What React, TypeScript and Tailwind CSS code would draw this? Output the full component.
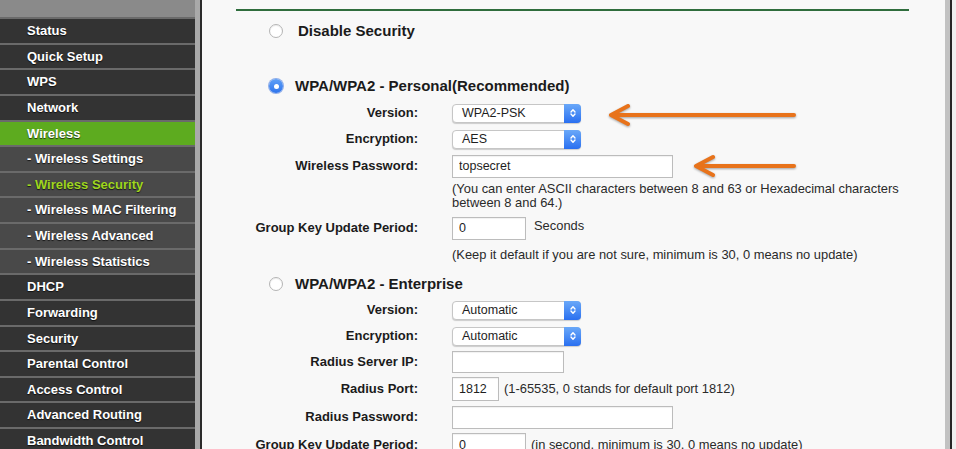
type MenuItem = { label: string; kind: "main" | "active" | "sub" | "subActive" };

const menu: MenuItem[] = [
  { label: "Status", kind: "main" },
  { label: "Quick Setup", kind: "main" },
  { label: "WPS", kind: "main" },
  { label: "Network", kind: "main" },
  { label: "Wireless", kind: "active" },
  { label: "- Wireless Settings", kind: "sub" },
  { label: "- Wireless Security", kind: "subActive" },
  { label: "- Wireless MAC Filtering", kind: "sub" },
  { label: "- Wireless Advanced", kind: "sub" },
  { label: "- Wireless Statistics", kind: "sub" },
  { label: "DHCP", kind: "main" },
  { label: "Forwarding", kind: "main" },
  { label: "Security", kind: "main" },
  { label: "Parental Control", kind: "main" },
  { label: "Access Control", kind: "main" },
  { label: "Advanced Routing", kind: "main" },
  { label: "Bandwidth Control", kind: "main" },
];

const rowBg = {
  main: "bg-[#333333] text-white",
  active: "bg-[#5dab1f] text-white",
  sub: "bg-[#494949] text-white",
  subActive: "bg-[#494949] text-[#9fd61e]",
};

function Radio({ checked }: { checked?: boolean }) {
  if (checked) {
    return (
      <span className="flex h-[14px] w-[14px] items-center justify-center rounded-full bg-gradient-to-b from-[#5e9ff7] to-[#2f74ec] shadow-[0_0_0_1px_rgba(40,100,220,0.5)]">
        <span className="h-[5px] w-[5px] rounded-full bg-white" />
      </span>
    );
  }
  return (
    <span className="h-[14px] w-[14px] rounded-full border border-[#b5b5b5] bg-white shadow-[inset_0_1px_1px_rgba(0,0,0,0.08)]" />
  );
}

function MacSelect({ value }: { value: string }) {
  return (
    <div className="flex h-[19px] w-[129px] rounded-[4px] border border-[#c6c6c6] bg-white shadow-[0_1px_1px_rgba(0,0,0,0.18)]">
      <span className="flex-1 pl-[9px] text-[12.5px] leading-[17px] text-[#1e1e1e]">{value}</span>
      <span className="-my-px -mr-px flex w-[17px] items-center justify-center rounded-r-[4px] bg-gradient-to-b from-[#6aa8f8] to-[#2a6ff0]">
        <svg width="8" height="12" viewBox="0 0 8 12" fill="none" stroke="white" strokeWidth="1.4" strokeLinecap="round" strokeLinejoin="round">
          <path d="M2 5 L4 2.8 L6 5" />
          <path d="M2 7 L4 9.2 L6 7" />
        </svg>
      </span>
    </div>
  );
}

function TextBox({ value, w, h }: { value: string; w: string; h: string }) {
  return (
    <input
      readOnly
      value={value}
      className={`${w} ${h} border border-[#bcbcbc] bg-white px-[6px] text-[12.5px] text-[#1e1e1e] shadow-[inset_0_1px_1px_rgba(0,0,0,0.06)] outline-none`}
    />
  );
}

function Row({ label, h, children }: { label: string; h: string; children: React.ReactNode }) {
  return (
    <div className={`flex ${h} items-center`}>
      <div className="w-[182px] text-right text-[13px] font-bold text-[#1b1b1b]">{label}</div>
      <div className="ml-[34px] flex items-center">{children}</div>
    </div>
  );
}

function Help({ children }: { children: React.ReactNode }) {
  return <p className="ml-[216px] pt-[2px] text-[12.9px] leading-[14px] text-[#2a2a2a]">{children}</p>;
}

export default function App() {
  return (
    <div className="relative flex h-[449px] w-[956px] overflow-hidden bg-[#f8f8f8] font-['Liberation_Sans',Arial,sans-serif]">
      {/* sidebar */}
      <aside className="w-[195px] shrink-0 bg-[#333333]">
        <div className="h-[17px] bg-[#8a8a8a]" />
        {menu.map((item) => (
          <div
            key={item.label}
            className={`flex h-[25.625px] items-center border-t-2 border-[#6a6a6a] pl-[27px] text-[13px] font-bold whitespace-nowrap [text-shadow:0_1px_1px_rgba(0,0,0,0.7)] ${rowBg[item.kind]}`}
          >
            {item.label}
          </div>
        ))}
      </aside>
      <div className="w-[5px] shrink-0 bg-[#a9a9a9]" />
      <div className="w-[2px] shrink-0 bg-[#2b2b2b]" />

      {/* content */}
      <main className="flex-1 pl-[34px] pt-[9px]">
        <div className="h-[2px] w-[673px] bg-[#2f6d3d]" />

        <div className="flex h-[40px] items-center pl-[33px]">
          <Radio />
          <span className="ml-[15px] text-[15px] font-bold text-[#1b1b1b]">Disable Security</span>
        </div>

        <div className="mt-[21px] flex h-[28px] items-center pl-[33px]">
          <Radio checked />
          <span className="ml-[12px] text-[15px] font-bold text-[#1b1b1b]">WPA/WPA2 - Personal(Recommended)</span>
        </div>
        <Row label="Version:" h="h-[26px]">
          <MacSelect value="WPA2-PSK" />
        </Row>
        <Row label="Encryption:" h="h-[26px]">
          <MacSelect value="AES" />
        </Row>
        <Row label="Wireless Password:" h="h-[28px]">
          <TextBox value="topsecret" w="w-[221px]" h="h-[23px]" />
        </Row>
        <Help>
          (You can enter ASCII characters between 8 and 63 or Hexadecimal characters
          <br />
          between 8 and 64.)
        </Help>
        <Row label="Group Key Update Period:" h="h-[36px]">
          <TextBox value="0" w="w-[74px]" h="h-[23px]" />
          <span className="ml-[8px] -mt-[4px] text-[12.9px] text-[#2a2a2a]">Seconds</span>
        </Row>
        <Help>(Keep it default if you are not sure, minimum is 30, 0 means no update)</Help>

        <div className="mt-[9px] flex h-[26px] items-center pl-[33px]">
          <Radio />
          <span className="ml-[12px] text-[15px] font-bold text-[#1b1b1b]">WPA/WPA2 - Enterprise</span>
        </div>
        <Row label="Version:" h="h-[26px]">
          <MacSelect value="Automatic" />
        </Row>
        <Row label="Encryption:" h="h-[26px]">
          <MacSelect value="Automatic" />
        </Row>
        <Row label="Radius Server IP:" h="h-[26px]">
          <TextBox value="" w="w-[112px]" h="h-[22px]" />
        </Row>
        <Row label="Radius Port:" h="h-[28px]">
          <TextBox value="1812" w="w-[47px]" h="h-[24px]" />
          <span className="ml-[5px] text-[12.9px] text-[#2a2a2a]">(1-65535, 0 stands for default port 1812)</span>
        </Row>
        <Row label="Radius Password:" h="h-[28px]">
          <TextBox value="" w="w-[221px]" h="h-[23px]" />
        </Row>
        <Row label="Group Key Update Period:" h="h-[28px]">
          <TextBox value="0" w="w-[74px]" h="h-[24px]" />
          <span className="ml-[5px] text-[12.9px] text-[#2a2a2a]">(in second, minimum is 30, 0 means no update)</span>
        </Row>
      </main>

      <div className="w-[5px] shrink-0 bg-[#c2c2c2]" />
      <div className="w-[2px] shrink-0 bg-[#262626]" />
      <div className="w-[4px] shrink-0 bg-[#efefef]" />

      {/* annotation arrows */}
      <svg
        className="pointer-events-none absolute inset-0 drop-shadow-[0_1px_1px_rgba(0,0,0,0.35)]"
        width="956"
        height="449"
        fill="none"
        stroke="#e8731b"
        strokeWidth="4"
        strokeLinecap="round"
        strokeLinejoin="round"
      >
        <path d="M794 115 L613 115" />
        <path d="M628 106 L611 115 L628 124" />
        <path d="M794 166 L698 166" />
        <path d="M713 157 L696 166 L713 175" />
      </svg>
    </div>
  );
}
